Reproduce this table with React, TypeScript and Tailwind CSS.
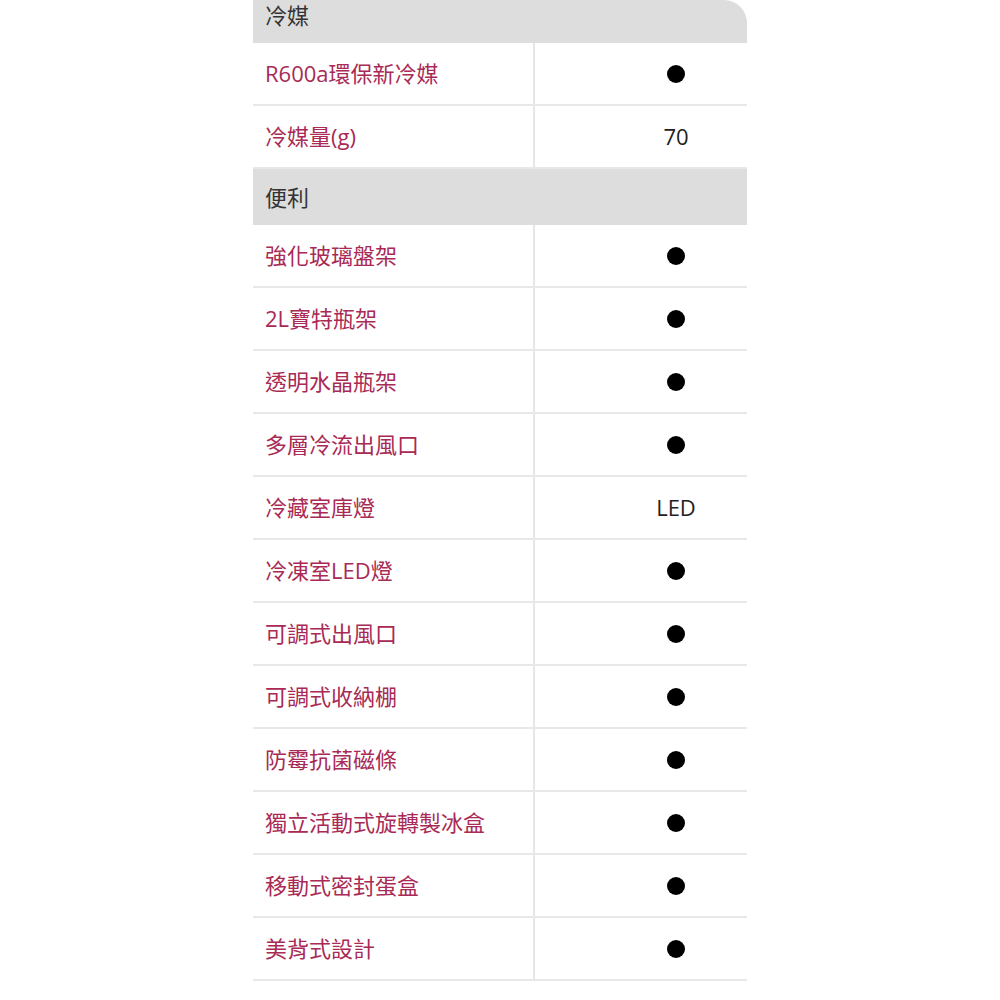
import React from 'react'

type Row = { label: string; value: string }

const font = { fontFamily: '"Open Sans", "Noto Sans CJK TC", sans-serif' }

const refrigerant: Row[] = [
  { label: 'R600a環保新冷媒', value: '●' },
  { label: '冷媒量(g)', value: '70' },
]

const convenience: Row[] = [
  { label: '強化玻璃盤架', value: '●' },
  { label: '2L寶特瓶架', value: '●' },
  { label: '透明水晶瓶架', value: '●' },
  { label: '多層冷流出風口', value: '●' },
  { label: '冷藏室庫燈', value: 'LED' },
  { label: '冷凍室LED燈', value: '●' },
  { label: '可調式出風口', value: '●' },
  { label: '可調式收納棚', value: '●' },
  { label: '防霉抗菌磁條', value: '●' },
  { label: '獨立活動式旋轉製冰盒', value: '●' },
  { label: '移動式密封蛋盒', value: '●' },
  { label: '美背式設計', value: '●' },
]

function SpecRow({ row }: { row: Row }) {
  return (
    <div className="flex h-[63px] border-b-2 border-[#e8e8e8]">
      <div className="w-[282px] flex items-center pl-3 border-r-2 border-[#e6e6e6] text-[22px] text-[#a82a55]">
        {row.label}
      </div>
      <div className="flex-1 flex items-center justify-center pl-[70px] text-[22px] text-[#222]">
        {row.value === '●' ? (
          <div className="w-[18px] h-[18px] rounded-full bg-black" />
        ) : (
          row.value
        )}
      </div>
    </div>
  )
}

export default function App() {
  return (
    <div className="w-full bg-white min-h-[1000px]" style={font}>
      <div className="w-[494px] mx-auto">
        <div className="h-[43px] pb-[12px] flex items-center pl-3 bg-[#dddddd] rounded-tr-[23px] text-[22px] text-[#333]">
          冷媒
        </div>
        {refrigerant.map(r => <SpecRow key={r.label} row={r} />)}
        <div className="h-[56px] flex items-center pl-3 bg-[#dddddd] text-[22px] text-[#333]">
          便利
        </div>
        {convenience.map(r => <SpecRow key={r.label} row={r} />)}
      </div>
    </div>
  )
}
